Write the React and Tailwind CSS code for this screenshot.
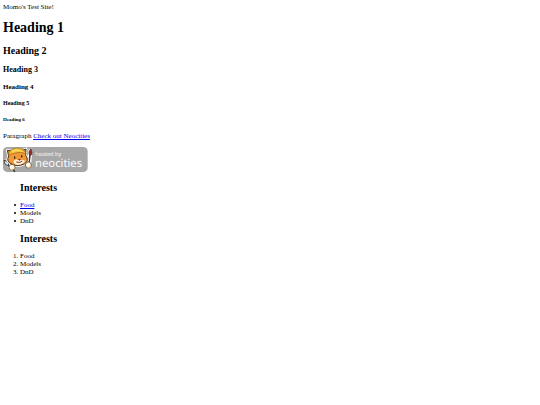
function NeocitiesBadge() {
  return (
    <svg viewBox="0 0 255 75" className="block h-[25px] w-[85px]" role="img" aria-label="Hosted by Neocities">
      <rect x="0" y="0" width="254" height="75" rx="13" fill="#a7a7a7" />
      {/* white outline behind the tools */}
      <g stroke="#fff" strokeWidth="12" strokeLinecap="round" fill="none">
        <path d="M8 44L28 66M82 12L78 54" />
      </g>
      {/* fork */}
      <path d="M3 40l10 3 5 8-5 5-9-7z" fill="#dcdcdc" stroke="#333" strokeWidth="3" />
      <path d="M14 54l11 11" stroke="#444" strokeWidth="4" />
      {/* brush */}
      <path d="M81 24L77 52" stroke="#57301f" strokeWidth="5" />
      <path d="M79 24c-3-8 0-14 5-18 4 6 4 13 1 18z" fill="#9c2f2a" stroke="#3d2222" strokeWidth="2" />
      {/* head */}
      <path d="M13 10L28 12Q45 2 56 11L69 6L68 25Q80 42 64 51Q42 61 24 50Q9 43 17 27Z" fill="#fff" stroke="#fff" strokeWidth="8" strokeLinejoin="round" />
      <path d="M13 10L28 12Q45 4 56 11L69 6L68 25Q80 42 64 51Q42 61 24 50Q9 43 17 27Z" fill="#ef9838" stroke="#4a301b" strokeWidth="3" strokeLinejoin="round" />
      <path d="M17 25Q17 7 39 3Q63 3 69 20Q52 13 37 18Q24 20 17 25Z" fill="#f5c338" stroke="#98631b" strokeWidth="2" />
      <path d="M27 13Q42 5 58 13" fill="none" stroke="#ffe07a" strokeWidth="3" />
      <path d="M32 41Q41 35 48 40Q60 35 66 42Q60 53 45 54Q29 51 32 41Z" fill="#fff0d6" />
      <ellipse cx="35" cy="32" rx="2" ry="4" fill="#332218" />
      <ellipse cx="56" cy="28" rx="2" ry="4" fill="#332218" />
      <path d="M45 37l8-1-3 5z" fill="#48251c" />
      <path d="M40 45Q50 49 58 42" fill="none" stroke="#7a3427" strokeWidth="3" />
      {/* paws */}
      <circle cx="27" cy="61" r="9" fill="#fff8e8" stroke="#4b3520" strokeWidth="2" />
      <circle cx="76" cy="54" r="9" fill="#fff8e8" stroke="#4b3520" strokeWidth="2" />
      <path d="M21 66Q28 74 34 65M71 60Q78 66 84 57" stroke="#ecb778" strokeWidth="3" fill="none" />
      {/* fork handle end */}
      <path d="M30 68l6 7" stroke="#333" strokeWidth="4" />
      <text x="97" y="28" fill="#fff" fontSize="17" fontFamily="'Open Sans', sans-serif" textRendering="geometricPrecision">hosted by</text>
      <text x="96" y="59" fill="#fff" fontSize="34" fontFamily="'Open Sans', sans-serif" textRendering="geometricPrecision">neocities</text>
    </svg>
  );
}

const bullet = "flex items-center gap-1 before:size-[2px] before:rounded-full before:bg-black";

export default function App() {
  return (
    <main className="p-[3px] font-['Liberation_Serif',serif] text-[7px] leading-2 text-black">
      <p>Momo's Test Site!</p>
      <h1 className="mt-[9px] text-[14px] leading-4 font-bold">Heading 1</h1>
      <h2 className="mt-[9px] text-[10px] leading-3 font-bold">Heading 2</h2>
      <h3 className="mt-2 text-[8px] leading-[10px] font-bold">Heading 3</h3>
      <h4 className="mt-2 font-bold">Heading 4</h4>
      <h5 className="mt-2 text-[6px] font-bold">Heading 5</h5>
      <h6 className="mt-[9px] text-[5px] font-bold">Heading 6</h6>
      <p className="mt-2">
        Paragraph <a href="#neocities" className="text-[#0000ee] underline">Check out Neocities</a>
      </p>
      <a href="#neocities" className="mt-[7px] block w-fit">
        <NeocitiesBadge />
      </a>
      <section className="mt-[10px] pl-[17px]">
        <h2 className="text-[10px] leading-3 font-bold">Interests</h2>
        <ul className="mt-[7px] -ml-[6px]">
          <li className={bullet}><a href="#food" className="text-[#0000ee] underline">Food</a></li>
          <li className={bullet}>Models</li>
          <li className={bullet}>DnD</li>
        </ul>
      </section>
      <section className="mt-2 pl-[17px]">
        <h2 className="text-[10px] leading-3 font-bold">Interests</h2>
        <ol className="mt-[7px] list-decimal">
          <li>Food</li>
          <li>Models</li>
          <li>DnD</li>
        </ol>
      </section>
    </main>
  );
}
